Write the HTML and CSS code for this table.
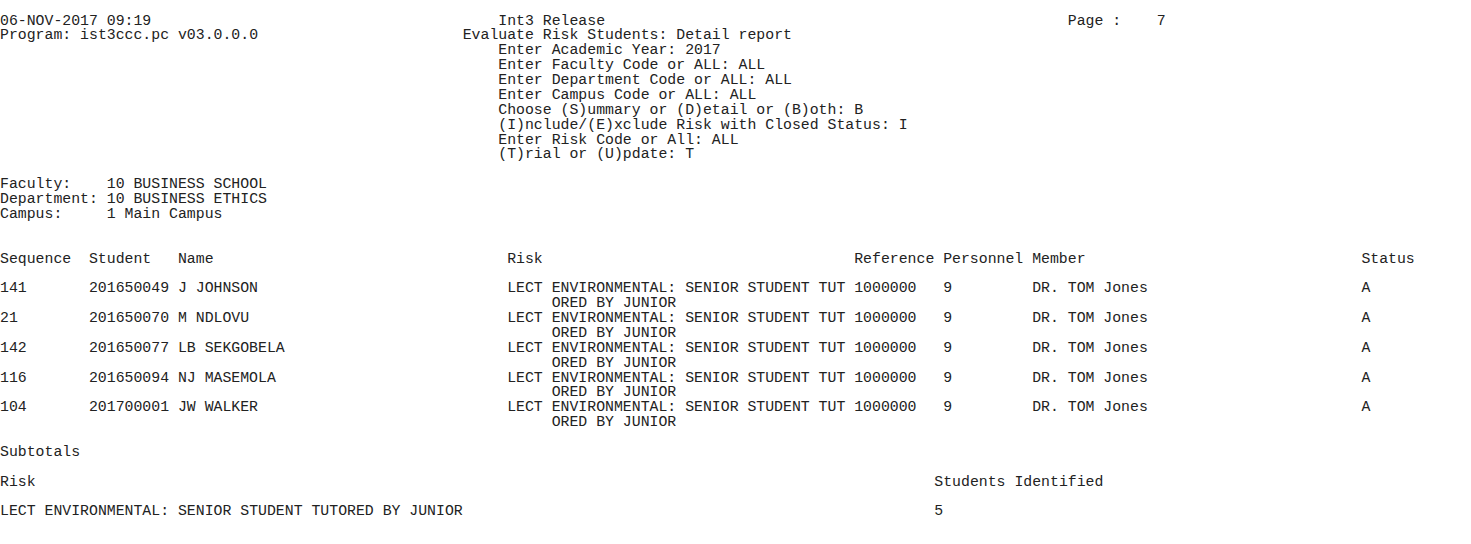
FILE: index.html
```html
<!DOCTYPE html>
<html lang="en">
<head>
<meta charset="utf-8">
<title>Evaluate Risk Students: Detail report</title>
<link rel="stylesheet" href="styles.css">
</head>
<body>
<main class="report">
  <header class="page-head">
    <div class="head-left">
      <div class="ln">06-NOV-2017 09:19</div>
      <div class="ln">Program: ist3ccc.pc v03.0.0.0</div>
    </div>
    <div class="head-mid">
      <div class="ln ind">Int3 Release</div>
      <div class="ln">Evaluate Risk Students: Detail report</div>
      <div class="ln ind">Enter Academic Year: 2017</div>
      <div class="ln ind">Enter Faculty Code or ALL: ALL</div>
      <div class="ln ind">Enter Department Code or ALL: ALL</div>
      <div class="ln ind">Enter Campus Code or ALL: ALL</div>
      <div class="ln ind">Choose (S)ummary or (D)etail or (B)oth: B</div>
      <div class="ln ind">(I)nclude/(E)xclude Risk with Closed Status: I</div>
      <div class="ln ind">Enter Risk Code or All: ALL</div>
      <div class="ln ind">(T)rial or (U)pdate: T</div>
    </div>
    <div class="head-right">
      <div class="ln">Page :    7</div>
    </div>
  </header>

  <section class="params">
    <div class="ln">Faculty:</div><div class="ln">10 BUSINESS SCHOOL</div>
    <div class="ln">Department:</div><div class="ln">10 BUSINESS ETHICS</div>
    <div class="ln">Campus:</div><div class="ln">1 Main Campus</div>
  </section>

  <section class="detail">
    <div class="trow thead">
      <div class="ln">Sequence</div><div class="ln">Student</div><div class="ln">Name</div><div class="ln">Risk</div><div class="ln">Reference</div><div class="ln">Personnel</div><div class="ln">Member</div><div class="ln">Status</div>
    </div>
    <div class="trow">
      <div class="ln">141</div><div class="ln">201650049</div><div class="ln">J JOHNSON</div>
      <div class="risk"><div class="ln">LECT ENVIRONMENTAL: SENIOR STUDENT TUT</div><div class="ln cont">ORED BY JUNIOR</div></div>
      <div class="ln">1000000</div><div class="ln">9</div><div class="ln">DR. TOM Jones</div><div class="ln">A</div>
    </div>
    <div class="trow">
      <div class="ln">21</div><div class="ln">201650070</div><div class="ln">M NDLOVU</div>
      <div class="risk"><div class="ln">LECT ENVIRONMENTAL: SENIOR STUDENT TUT</div><div class="ln cont">ORED BY JUNIOR</div></div>
      <div class="ln">1000000</div><div class="ln">9</div><div class="ln">DR. TOM Jones</div><div class="ln">A</div>
    </div>
    <div class="trow">
      <div class="ln">142</div><div class="ln">201650077</div><div class="ln">LB SEKGOBELA</div>
      <div class="risk"><div class="ln">LECT ENVIRONMENTAL: SENIOR STUDENT TUT</div><div class="ln cont">ORED BY JUNIOR</div></div>
      <div class="ln">1000000</div><div class="ln">9</div><div class="ln">DR. TOM Jones</div><div class="ln">A</div>
    </div>
    <div class="trow">
      <div class="ln">116</div><div class="ln">201650094</div><div class="ln">NJ MASEMOLA</div>
      <div class="risk"><div class="ln">LECT ENVIRONMENTAL: SENIOR STUDENT TUT</div><div class="ln cont">ORED BY JUNIOR</div></div>
      <div class="ln">1000000</div><div class="ln">9</div><div class="ln">DR. TOM Jones</div><div class="ln">A</div>
    </div>
    <div class="trow">
      <div class="ln">104</div><div class="ln">201700001</div><div class="ln">JW WALKER</div>
      <div class="risk"><div class="ln">LECT ENVIRONMENTAL: SENIOR STUDENT TUT</div><div class="ln cont">ORED BY JUNIOR</div></div>
      <div class="ln">1000000</div><div class="ln">9</div><div class="ln">DR. TOM Jones</div><div class="ln">A</div>
    </div>
  </section>

  <section class="subtotals">
    <div class="ln sub-title">Subtotals</div>
    <div class="srow shead">
      <div class="ln">Risk</div><div class="ln">Students Identified</div>
    </div>
    <div class="srow">
      <div class="ln">LECT ENVIRONMENTAL: SENIOR STUDENT TUTORED BY JUNIOR</div><div class="ln">5</div>
    </div>
  </section>
</main>
</body>
</html>
```

FILE: styles.css
```css
html, body {
  margin: 0;
  padding: 0;
  background: #ffffff;
}

.report {
  --lh: 14.89px;
  font-family: "Liberation Mono", "Courier New", monospace;
  font-size: 14.83px;
  line-height: var(--lh);
  color: #222222;
  padding-top: 13.5px;
  width: 1471px;
}

.ln {
  height: var(--lh);
  white-space: pre;
}

.page-head {
  display: grid;
  grid-template-columns: 52ch 68ch auto;
  align-items: start;
}

.ind {
  padding-left: 4ch;
}

.params {
  display: grid;
  grid-template-columns: 12ch auto;
  margin-top: var(--lh);
}

.detail {
  margin-top: calc(var(--lh) * 2);
}

.trow {
  display: grid;
  grid-template-columns: 10ch 10ch 37ch 39ch 10ch 10ch 37ch auto;
  align-items: start;
}

.thead {
  margin-bottom: var(--lh);
}

.cont {
  padding-left: 5ch;
}

.subtotals {
  margin-top: var(--lh);
}

.sub-title {
  margin-bottom: var(--lh);
}

.srow {
  display: grid;
  grid-template-columns: 105ch auto;
}

.shead {
  margin-bottom: var(--lh);
}
```
